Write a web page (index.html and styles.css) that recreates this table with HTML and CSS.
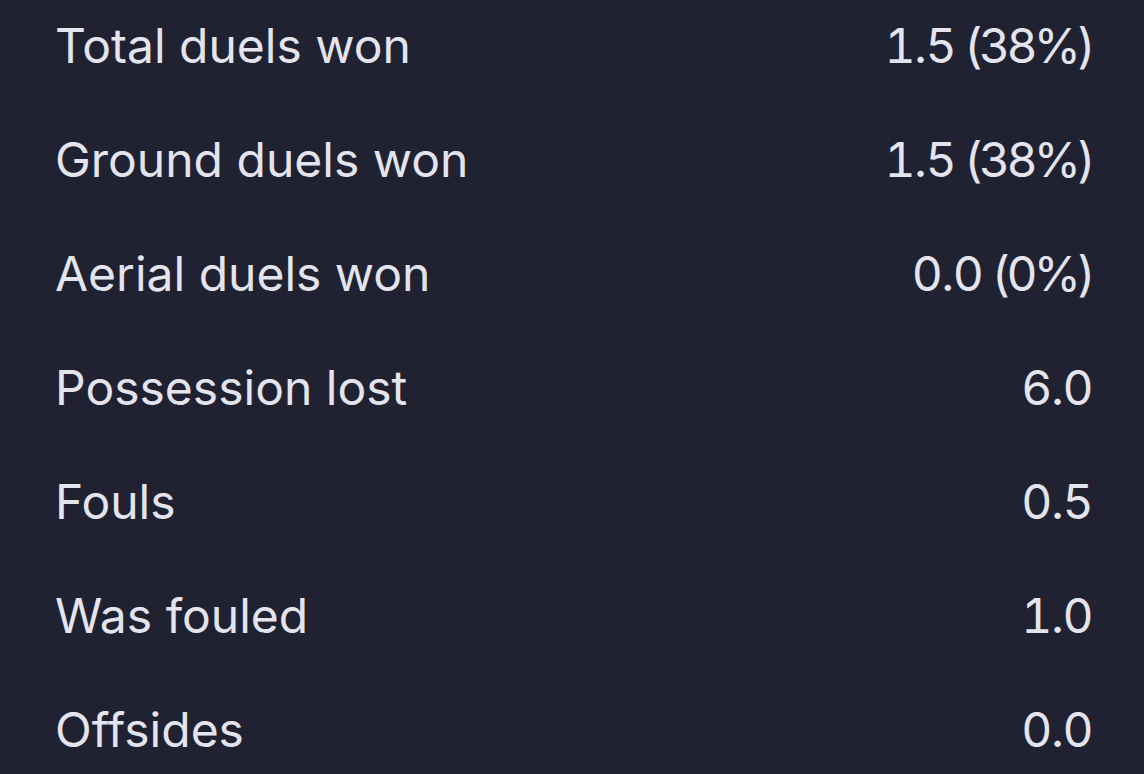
FILE: index.html
```html
<!DOCTYPE html>
<html>
<head>
<meta charset="utf-8">
<link rel="stylesheet" href="styles.css">
</head>
<body>
<div class="stats">
  <div class="row"><span class="label">Total duels won</span><span class="value">1.5<span class="pct"> (38%)</span></span></div>
  <div class="row"><span class="label">Ground duels won</span><span class="value">1.5<span class="pct"> (38%)</span></span></div>
  <div class="row"><span class="label">Aerial duels won</span><span class="value">0.0<span class="pct"> (0%)</span></span></div>
  <div class="row"><span class="label">Possession lost</span><span class="value">6.0</span></div>
  <div class="row"><span class="label">Fouls</span><span class="value">0.5</span></div>
  <div class="row"><span class="label">Was fouled</span><span class="value">1.0</span></div>
  <div class="row"><span class="label">Offsides</span><span class="value">0.0</span></div>
</div>
</body>
</html>
```
FILE: styles.css
```css
html, body {
  margin: 0;
  padding: 0;
  background: #202232;
  height: 100%;
  overflow: hidden;
}
.stats {
  display: flex;
  flex-direction: column;
  margin-top: -12px;
  padding: 0 52px 0 55px;
  font-family: Inter, "Noto Sans", sans-serif;
  font-size: 48px;
  color: #e3e4ee;
}
.row {
  height: 114px;
  display: flex;
  align-items: center;
  justify-content: space-between;
}
.value {
  font-variant-numeric: tabular-nums;
  letter-spacing: -1.5px;
}
.pct {
  letter-spacing: -3.8px;
}
```
